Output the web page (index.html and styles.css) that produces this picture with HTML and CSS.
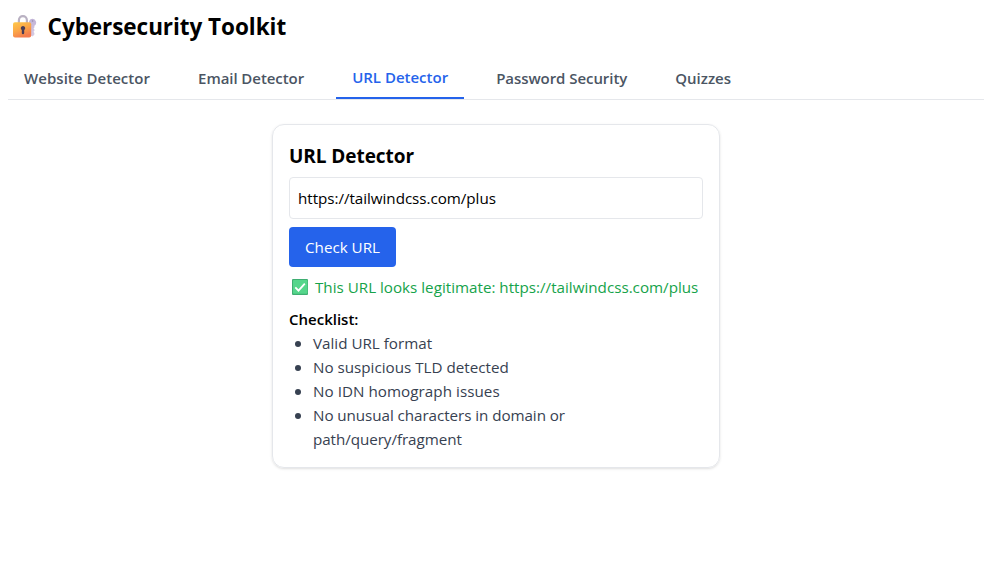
FILE: index.html
```
<!DOCTYPE html>
<html lang="en">
<head>
<meta charset="utf-8">
<title>Cybersecurity Toolkit</title>
<link rel="stylesheet" href="styles.css">
</head>
<body>
<header class="header">
  <svg class="lock" viewBox="0 0 28 28" aria-hidden="true">
    <defs>
      <linearGradient id="body" x1="0" y1="0" x2="0.5" y2="1"><stop offset="0" stop-color="#ffc94a"/><stop offset=".55" stop-color="#fba647"/><stop offset="1" stop-color="#f47b4e"/></linearGradient>
      <linearGradient id="key" x1="0" y1="0" x2="0" y2="1"><stop offset="0" stop-color="#c0b2d6"/><stop offset="1" stop-color="#d8cbe2"/></linearGradient>
    </defs>
    <path d="M6.9 11V7.2a4 4 0 0 1 8 0V11" fill="none" stroke="#b9b1c2" stroke-width="2.2"/>
    <path fill="url(#key)" d="M20.3 5.8a3.8 3.8 0 0 1 2.1 7v1.6l-.9 1 .9 1v1.4l-.9 1 .9 1.2v1.4l-1.5 1.8h-1l-1.3-1.3v-9.1a3.8 3.8 0 0 1 1.7-7z"/>
    <circle cx="20.6" cy="8" r=".8" fill="#978aae"/>
    <rect x="1" y="9.2" width="18.2" height="15.2" rx="2" fill="url(#body)"/>
    <path d="M11 12.9a2.3 2.3 0 0 1 1.2 4.2v3a1.2 1.2 0 0 1-2.4 0v-3a2.3 2.3 0 0 1 1.2-4.2z" fill="#493c56"/>
  </svg>
  <h1 class="title">Cybersecurity Toolkit</h1>
</header>
<nav class="tabs">
  <button class="tab loose">Website Detector</button>
  <button class="tab tight">Email Detector</button>
  <button class="tab tab-active">URL Detector</button>
  <button class="tab tight">Password Security</button>
  <button class="tab">Quizzes</button>
</nav>
<main class="card">
  <h2 class="card-title tight">URL Detector</h2>
  <input class="field" type="text" value="https://tailwindcss.com/plus">
  <button class="check">Check URL</button>
  <p class="result">
    <svg class="tick" viewBox="0 0 22 24" aria-hidden="true"><rect x="3" y="4" width="16" height="16" rx="1" fill="#3fae72"/><rect x="4" y="4.9" width="14.4" height="13.9" rx=".8" fill="#55d68b"/><path d="M6.3 12.3l3.2 3.3 6.3-7" fill="none" stroke="#fff" stroke-width="1.8"/></svg>
    <span>This URL looks legitimate: https://tailwindcss.com/plus</span>
  </p>
  <h3 class="list-title">Checklist:</h3>
  <ul class="list">
    <li><span>Valid URL format</span></li>
    <li><span>No suspicious TLD detected</span></li>
    <li><span class="loose">No IDN homograph issues</span></li>
    <li><span class="tight">No unusual characters in domain or path/query/fragment</span></li>
  </ul>
</main>
</body>
</html>
```
FILE: styles.css
```
* { box-sizing: border-box; }
html { min-height: 100vh; }
body { margin: 0; padding: 9px 2px 16px 8px; min-height: 100vh; background: #fff; color: #000; font: 15.2px/24px "Open Sans", "Noto Sans", sans-serif; }
h1, h2, h3, p, ul { margin: 0; padding: 0; }
button, input { font: inherit; color: inherit; border: 0; background: none; margin: 0; }
.header { display: flex; align-items: center; height: 32px; margin-bottom: 16px; }
.lock { width: 28px; height: 28px; margin: 4px 7.6px 0 4px; }
.title { font-size: 22.5px; line-height: 32px; font-weight: 700; letter-spacing: -.05px; padding-top: 4px; }
.tabs { display: flex; gap: 16px; border-bottom: 1px solid #e5e7eb; }
.tab { padding: 8px 16px; height: 42px; font-size: 15px; font-weight: 600; color: #4b5563; white-space: nowrap; }
.tab-active { color: #2563eb; border-bottom: 2px solid #2563eb; }
.loose { letter-spacing: .045px; }
.tight { letter-spacing: -.058px; }
.card { width: 448px; height: 344px; margin: 24px 0 0 264px; padding: 16px; border: 1px solid #e5e7eb; border-radius: 12px; box-shadow: 0 1px 3px rgba(0,0,0,.1), 0 1px 2px -1px rgba(0,0,0,.1); }
.card-title { font-size: 19px; line-height: 28px; font-weight: 700; padding-top: 1px; margin-bottom: 7px; }
.field { display: block; width: 100%; height: 42px; padding: 8px; border: 1px solid #e5e7eb; border-radius: 4px; margin-bottom: 8px; letter-spacing: -.04px; }
.check { display: block; height: 40px; padding: 8px 16px; border-radius: 4px; background: #2563eb; color: #fff; margin-bottom: 8px; }
.result { display: flex; gap: 4px; color: #16a34a; margin-bottom: 8px; white-space: nowrap; }
.tick { width: 22px; height: 24px; flex: none; }
.list-title { font-size: 15px; font-weight: 600; }
.list { padding-left: 24px; color: #374151; font-size: 16px; }
.list span { font-size: 15.2px; }
```
